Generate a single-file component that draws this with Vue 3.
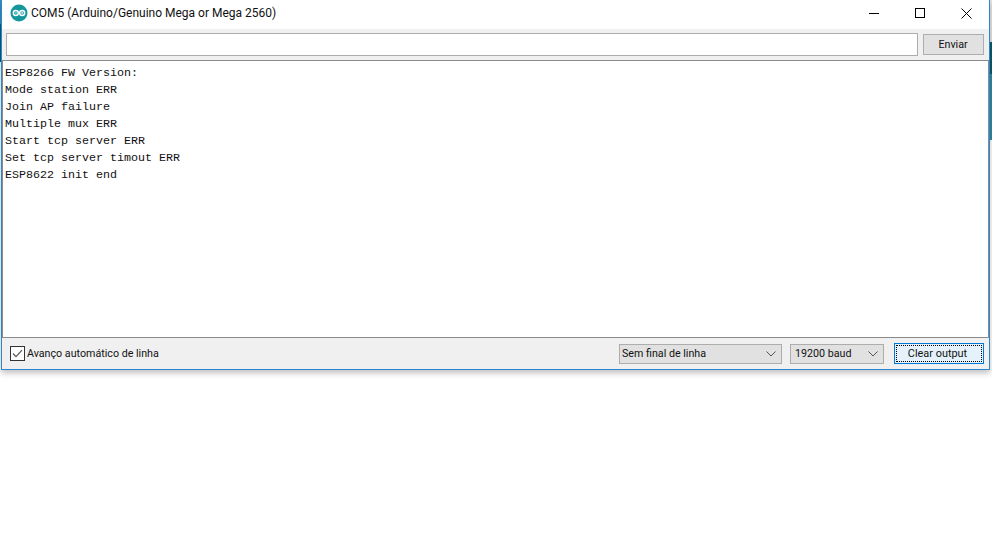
<script setup>
const lines = ['ESP8266 FW Version:','Mode station ERR','Join AP failure','Multiple mux ERR','Start tcp server ERR','Set tcp server timout ERR','ESP8622 init end']
</script>

<template>
  <div class="page">
    <div class="strip left"></div>
    <div class="strip right"></div>
    <div class="window">
      <header class="titlebar">
        <svg class="logo" width="18" height="18" viewBox="0 0 18 18">
          <circle cx="9" cy="9" r="8.5" fill="#13979d"/>
          <circle cx="5.8" cy="9" r="2.5" fill="none" stroke="#fff" stroke-width="1.4"/>
          <circle cx="12.2" cy="9" r="2.5" fill="none" stroke="#fff" stroke-width="1.4"/>
          <path d="M4.8 9h2M11.2 9h2M12.2 8v2" stroke="#fff" stroke-width="0.8"/>
        </svg>
        <span class="title">COM5 (Arduino/Genuino Mega or Mega 2560)</span>
        <div class="controls">
          <svg width="11" height="11" viewBox="0 0 11 11"><path d="M0 5.5h10" stroke="#000"/></svg>
          <svg width="11" height="11" viewBox="0 0 11 11"><rect x="0.5" y="0.5" width="9" height="9" fill="none" stroke="#000"/></svg>
          <svg width="11" height="11" viewBox="0 0 11 11"><path d="M0.5 0.5l10 10M10.5 0.5l-10 10" stroke="#000"/></svg>
        </div>
      </header>
      <div class="sendbar">
        <input class="cmd" type="text" />
        <button class="send">Enviar</button>
      </div>
      <div class="output">
        <div v-for="l in lines" :key="l" class="line">{{ l }}</div>
      </div>
      <footer class="footer">
        <label class="auto">
          <span class="check">
            <svg width="13" height="13" viewBox="0 0 13 13"><path d="M2 6.5l3 3.2 6-6.6" fill="none" stroke="#555" stroke-width="1.2"/></svg>
          </span>
          Avanço automático de linha
        </label>
        <div class="select ending"><span>Sem final de linha</span><svg width="10" height="6" viewBox="0 0 10 6"><path d="M0.5 0.5l4.5 4.5 4.5-4.5" fill="none" stroke="#555"/></svg></div>
        <div class="select baud"><span>19200 baud</span><svg width="10" height="6" viewBox="0 0 10 6"><path d="M0.5 0.5l4.5 4.5 4.5-4.5" fill="none" stroke="#555"/></svg></div>
        <button class="clear"><span>Clear output</span></button>
      </footer>
    </div>
  </div>
</template>

<style>
html, body { margin: 0; background: #fff; }
</style>

<style scoped>
.page { position: relative; width: 992px; height: 540px; overflow: hidden; background: #fff; font-family: Roboto, "Open Sans", sans-serif; }
.strip { position: absolute; top: 0; }
.left { left: 0; width: 1px; height: 62px; background: linear-gradient(#3d8fb5 0 24px, #0f5f70 24px); }
.right { left: 990px; width: 2px; height: 140px; background: linear-gradient(#e4e4e4 0 42px, #0b5c6c 42px 74px, #2f8ba3 74px); }
.window { position: relative; width: 989px; margin-left: 1px; height: 370px; box-sizing: border-box; border: 1px solid #2b86d1; border-top: 0; background: #f0f0f0; display: flex; flex-direction: column; box-shadow: 0 3px 6px rgba(0,0,0,.25); }
.titlebar { height: 29px; flex: none; background: #fff; display: flex; align-items: center; padding-left: 8px; padding-bottom: 3px; box-sizing: border-box; }
.logo { flex: none; }
.title { margin-left: 3px; font-size: 12px; color: #111; }
.controls { margin-left: auto; display: flex; gap: 35px; padding-right: 17px; align-items: center; }
.controls svg { display: block; }
.sendbar { height: 31px; flex: none; display: flex; align-items: flex-start; padding: 4px 5px 0 4px; gap: 5px; box-sizing: border-box; }
.cmd { flex: 1; height: 23px; box-sizing: border-box; border: 1px solid #adadad; background: #fff; margin: 0; padding: 0; outline: none; }
.send { width: 61px; height: 21px; margin-top: 1px; box-sizing: border-box; border: 1px solid #adadad; background: #e1e1e1; font: 10.7px Roboto, sans-serif; color: #111; padding: 0 1px 0 0; }
.output { flex: 1; background: #fff; border: 1px solid #8a8a8a; padding: 4px 2px 2px; margin: 0; font-family: "Liberation Mono", monospace; font-size: 11.67px; line-height: 17px; color: #111; min-height: 0; }
.line { white-space: pre; height: 17px; }
.footer { height: 31px; flex: none; display: flex; align-items: center; padding: 1px 4px 1px 8px; box-sizing: border-box; font-size: 10.7px; color: #111; }
.auto { display: flex; align-items: center; gap: 2px; margin-right: auto; }
.check { width: 13px; height: 13px; border: 1px solid #333; background: #fff; display: flex; }
.select { box-sizing: border-box; height: 20px; border: 1px solid #adadad; background: #e1e1e1; display: flex; align-items: center; justify-content: space-between; padding: 0 5px 0 2px; }
.ending { width: 163px; margin-right: 8px; }
.baud { width: 94px; margin-right: 10px; padding-left: 4px; }
.clear { box-sizing: border-box; width: 90px; height: 21px; border: 1px solid #0078d7; background: #e5f1fb; font: 10.9px Roboto, sans-serif; color: #111; padding: 1px; margin-right: 1px; }
.clear span { display: flex; width: 100%; height: 100%; box-sizing: border-box; border: 1px dotted #000; align-items: center; justify-content: center; padding-right: 3px; }
</style>
